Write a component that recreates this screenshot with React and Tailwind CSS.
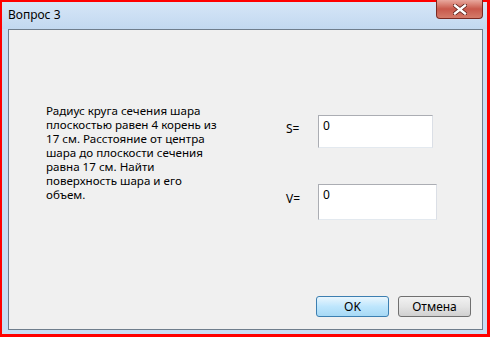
export default function App() {
  const lines = [
    'Радиус круга сечения шара',
    'плоскостью равен 4 корень из',
    '17 см. Расстояние от центра',
    'шара до плоскости сечения',
    'равна 17 см. Найти',
    'поверхность шара и его',
    'объем.',
  ]
  return (
    <div className="w-[490px] h-[337px] bg-[#c9ddf3] border-[#ff0000] border-l-2 border-t-2 border-r-[3px] border-b-[3px] flex flex-col font-['Noto_Sans',sans-serif] text-[12px] text-black">
      {/* title bar */}
      <div className="h-[27px] flex items-start bg-gradient-to-b from-[#d6e6f7] to-[#c2d8f0] pl-[6px] pr-[4px]">
        <div className="mt-[5px] leading-[16px]">Вопрос 3</div>
        <div className="ml-auto mt-[-2px] w-[47px] h-[19px] rounded-b-[4px] border border-t-0 border-[#7a2a22] bg-gradient-to-b from-[#e8a89e] via-[#c8584b] to-[#d47b6a] flex items-center justify-center">
          <svg width="14" height="11" viewBox="0 0 14 11">
            <path d="M2 1.5 L12 9.5 M12 1.5 L2 9.5" stroke="#5a1d16" strokeWidth="4" strokeLinecap="square" />
            <path d="M2 1.5 L12 9.5 M12 1.5 L2 9.5" stroke="#ffffff" strokeWidth="2.4" strokeLinecap="square" />
          </svg>
        </div>
      </div>
      {/* client */}
      <div className="flex-1 ml-[6px] mr-[4px] mb-[4px] border border-[#6f7d8c] bg-[#f0f0f0] flex flex-col">
        <div className="flex">
          <div className="ml-[37px] mt-[74px] w-[166px] leading-[14px] text-[11.6px] whitespace-nowrap">
            {lines.map((l) => (
              <div key={l}>{l}</div>
            ))}
          </div>
          <div className="ml-[74px] mt-[85px] flex flex-col gap-[36px]">
            <div className="flex items-center">
              <div className="w-[32px] mt-[-6px]">S=</div>
              <div className="w-[115px] h-[33px] bg-white border border-[#abadb3] border-r-[#dbdfe6] border-b-[#e3e9ef] px-[4px] pt-[3px] leading-[14px]">0</div>
            </div>
            <div className="flex items-center">
              <div className="w-[32px] mt-[-6px]">V=</div>
              <div className="w-[119px] h-[36px] bg-white border border-[#abadb3] border-r-[#dbdfe6] border-b-[#e3e9ef] px-[4px] pt-[3px] leading-[14px]">0</div>
            </div>
          </div>
        </div>
        <div className="mt-auto mb-[12px] mr-[11px] flex justify-end gap-[9px]">
          <button className="w-[73px] h-[21px] rounded-[3px] border border-[#3c7fb1] bg-gradient-to-b from-[#eaf6fd] via-[#bee6fd] to-[#a7d9f5] text-[12px] leading-[16px]">OK</button>
          <button className="w-[73px] h-[21px] rounded-[3px] border border-[#707070] bg-gradient-to-b from-[#f2f2f2] via-[#e4e4e4] to-[#d0d0d0] text-[12px] leading-[16px]">Отмена</button>
        </div>
      </div>
    </div>
  )
}
